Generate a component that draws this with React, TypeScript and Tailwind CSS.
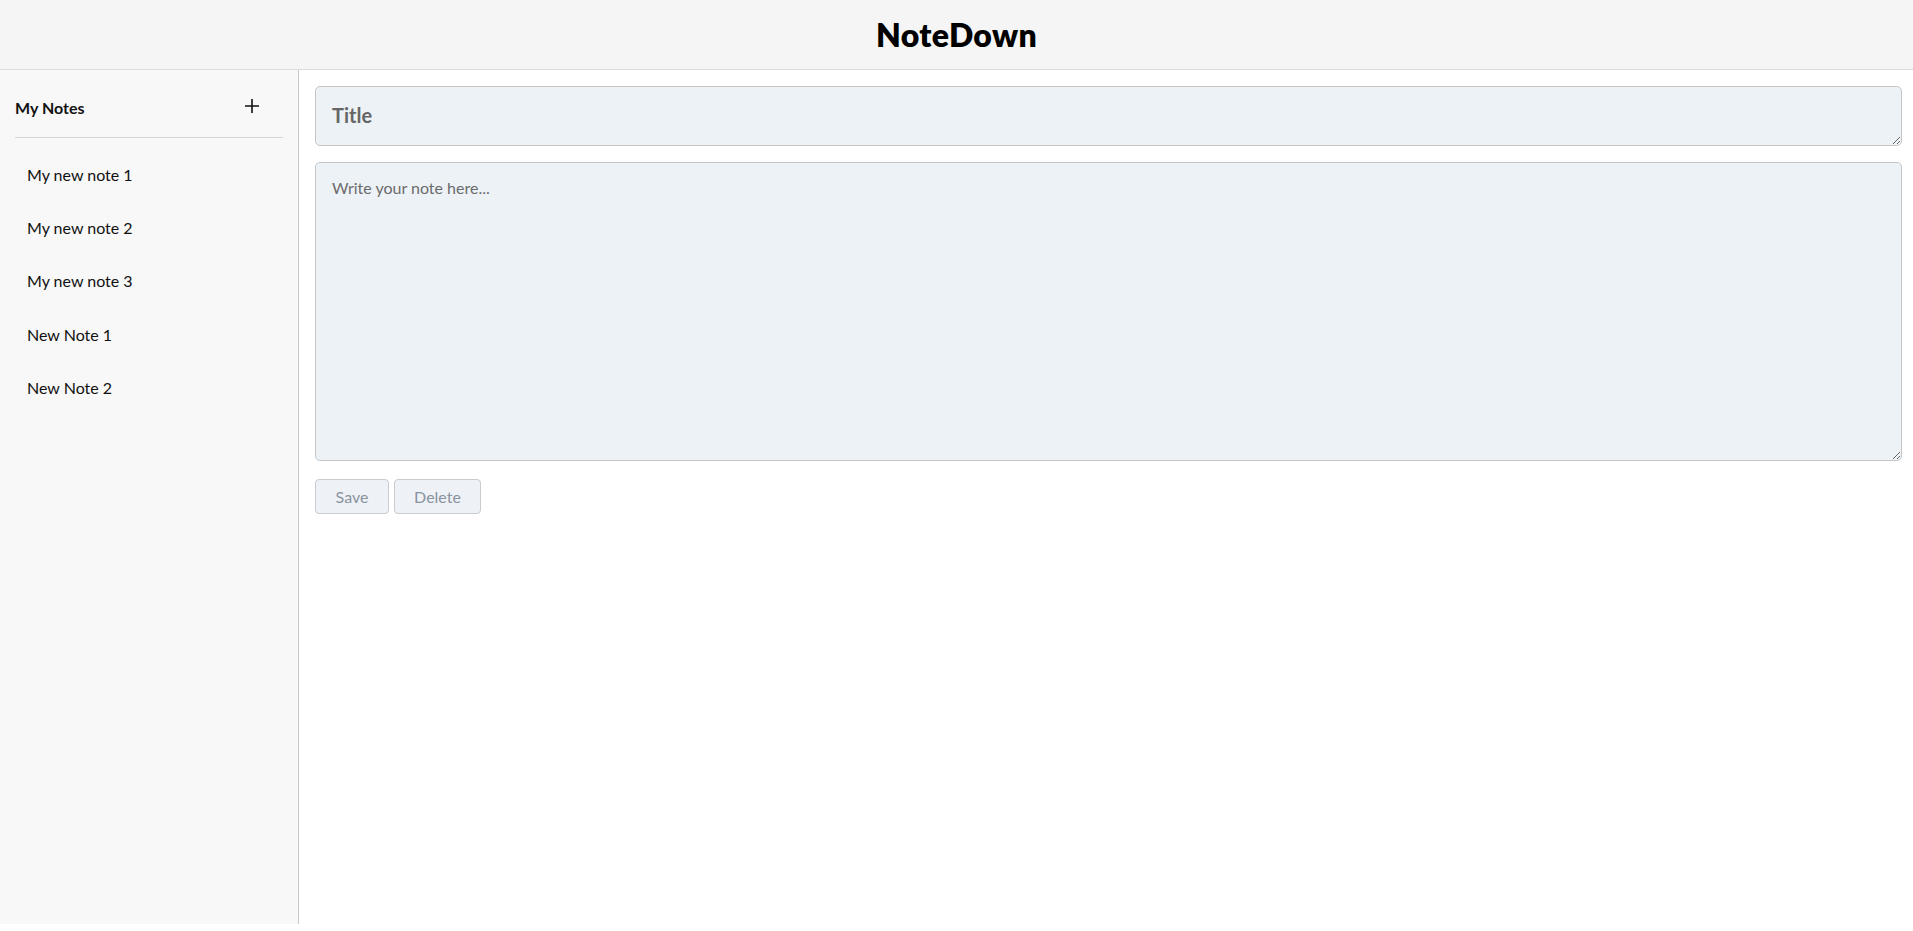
import React, { useState } from 'react';

const notes = ['My new note 1', 'My new note 2', 'My new note 3', 'New Note 1', 'New Note 2'];

export default function App() {
  const [title, setTitle] = useState('');
  const [body, setBody] = useState('');

  return (
    <div className="min-h-screen bg-white text-[#111] font-['Lato','Noto_Sans',sans-serif]">
      {/* Header */}
      <header className="h-[70px] bg-[#f5f5f5] border-b border-[#dcdcdc] flex items-center justify-center">
        <h1 className="text-[32px] font-extrabold tracking-[0.3px] text-black">NoteDown</h1>
      </header>

      <div className="flex">
        {/* Sidebar */}
        <aside className="w-[299px] h-[854px] shrink-0 bg-[#f8f8f8] border-r border-[#c9c9c9] px-[15px]">
          <div className="mt-[14px] h-[54px] pb-[5px] flex items-center justify-between border-b border-[#d6d6d6]">
            <span className="text-[16px] font-bold">My Notes</span>
            <button className="mr-[22px] mb-[4px] w-[18px] h-[18px] flex items-center justify-center text-[#111]">
              <svg width="16" height="16" viewBox="0 0 16 16" fill="none" stroke="currentColor" strokeWidth="1.6">
                <path d="M8 1v14M1 8h14" />
              </svg>
            </button>
          </div>
          <ul className="mt-[10px]">
            {notes.map((n) => (
              <li key={n} className="h-[53.3px] flex items-center px-[12px] text-[16px] cursor-pointer">
                {n}
              </li>
            ))}
          </ul>
        </aside>

        {/* Editor */}
        <main className="flex-1 pl-[16px] pr-[11px] pt-[16px]">
          <textarea
            rows={1}
            value={title}
            onChange={(e) => setTitle(e.target.value)}
            placeholder="Title"
            className="block w-full h-[60px] px-[16px] pt-[14px] pb-[14px] text-[20px] leading-[28px] font-bold bg-[#edf2f7] border border-[#c6c6c6] rounded-[5px] placeholder-[#666] outline-none resize-y"
          />
          <textarea
            value={body}
            onChange={(e) => setBody(e.target.value)}
            placeholder="Write your note here..."
            className="block w-full h-[299px] mt-[16px] px-[16px] pt-[13px] pb-[16px] text-[16px] leading-[24px] bg-[#edf2f7] border border-[#c6c6c6] rounded-[5px] placeholder-[#6b6b6b] outline-none resize-y"
          />
          <div className="flex gap-[5px] mt-[18px]">
            <button className="h-[35px] w-[74px] text-[16px] text-[#8a93a0] bg-[#eef1f5] border border-[#c8ccd1] rounded-[4px]">
              Save
            </button>
            <button className="h-[35px] w-[87px] text-[16px] text-[#8a93a0] bg-[#eef1f5] border border-[#c8ccd1] rounded-[4px]">
              Delete
            </button>
          </div>
        </main>
      </div>
    </div>
  );
}
